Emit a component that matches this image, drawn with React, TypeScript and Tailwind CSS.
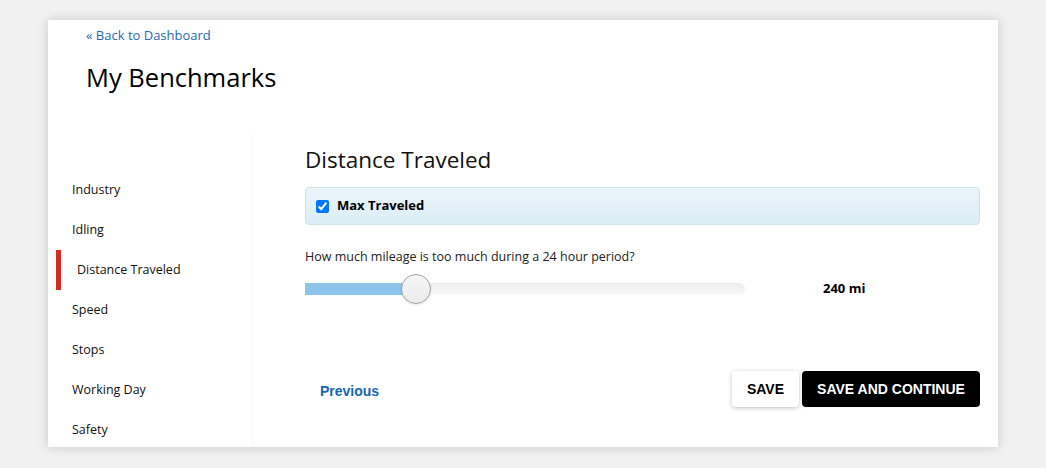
import React from 'react';

const sections = ['Industry', 'Idling', 'Distance Traveled', 'Speed', 'Stops', 'Working Day', 'Safety'];

const Sidebar: React.FC<{ active: string }> = ({ active }) => (
  <nav className="w-[205px] shrink-0 border-r border-[#f7f7f7] pt-[36px]">
    {sections.map((name) => (
      <div
        key={name}
        className={
          name === active
            ? 'ml-[8px] flex h-[40px] items-center border-l-[5px] border-[#d62b20] pl-[16px] text-[12.5px] text-[#111]'
            : 'ml-[8px] flex h-[40px] items-center pl-[16px] text-[12.5px] text-[#111]'
        }
      >
        {name}
      </div>
    ))}
  </nav>
);

const MileageSlider: React.FC = () => (
  <div className="mt-[8px] flex h-[30px] items-center">
    {/* track */}
    <div className="relative h-[12px] w-[440px] rounded-r-[6px] bg-gradient-to-b from-[#ececec] to-[#fafafa]">
      <div className="h-full w-[111px] bg-[#8cc4ec]" />
      {/* thumb */}
      <div className="absolute left-[96px] top-[-9px] h-[30px] w-[30px] rounded-full border border-[#a3a3a3] bg-gradient-to-b from-[#f6f6f6] to-[#ebebeb] shadow-[0_1px_2px_rgba(0,0,0,0.12)]" />
    </div>
    <span className="ml-[78px] text-[13px] font-bold text-black">240 mi</span>
  </div>
);

export default function App() {
  return (
    <div className="h-[468px] w-full bg-[#f1f1f1] pl-[48px] pt-[20px] font-['Open_Sans',sans-serif]">
      <div className="h-[427px] w-[950px] overflow-hidden bg-white shadow-[0_0_10px_rgba(0,0,0,0.18)]">
        {/* Header */}
        <div className="pl-[38px] pt-[5px]">
          <a className="block text-[13px] leading-[20px] text-[#1f68b5]">« Back to Dashboard</a>
          <h1 className="mt-[15px] text-[25.5px] leading-[34px] text-black">My Benchmarks</h1>
        </div>

        <div className="mt-[40px] flex h-[314px]">
          <Sidebar active="Distance Traveled" />

          <main className="flex-1 pl-[52px] pr-[18px] pt-[12px]">
            <h2 className="text-[22.5px] leading-[28px] text-[#111]">Distance Traveled</h2>

            {/* Max Traveled toggle */}
            <div className="mt-[13px] flex h-[38px] items-center rounded-[4px] border border-[#cfe2ec] bg-gradient-to-b from-[#eaf5fa] to-[#dcedf5] pl-[10px]">
              <input type="checkbox" defaultChecked className="h-[13px] w-[13px] accent-[#0075ff]" />
              <span className="ml-[8px] text-[13px] font-bold text-black">Max Traveled</span>
            </div>

            <p className="mt-[23px] text-[12.5px] leading-[18px] text-[#222]">
              How much mileage is too much during a 24 hour period?
            </p>

            <MileageSlider />

            {/* Footer actions */}
            <div className="mt-[67px] flex items-center justify-between font-['Liberation_Sans',Arial,sans-serif]">
              <button className="ml-[15px] mt-[4px] text-[14px] font-bold text-[#1565b5]">Previous</button>
              <div className="flex gap-[3px]">
                <button className="h-[36px] w-[67px] rounded-[4px] bg-white text-[14px] font-bold text-black shadow-[0_1px_4px_rgba(0,0,0,0.25)]">
                  SAVE
                </button>
                <button className="h-[36px] w-[178px] rounded-[4px] bg-black text-[14px] font-bold text-white">
                  SAVE AND CONTINUE
                </button>
              </div>
            </div>
          </main>
        </div>
      </div>
    </div>
  );
}
